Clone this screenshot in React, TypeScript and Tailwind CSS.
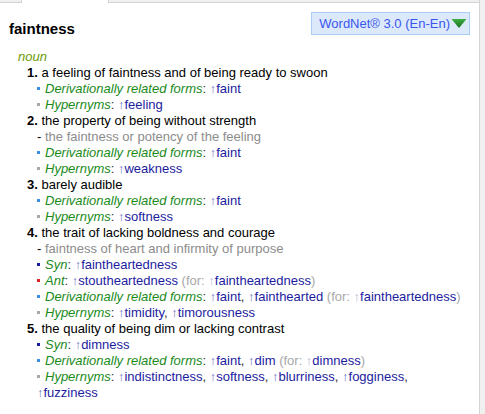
type Part = { t: string; link?: boolean; muted?: boolean };

const Up = ({ muted }: { muted?: boolean }) => (
  <span className={muted ? "text-[#b4b4d8]" : "text-[#7070c0]"}>↑</span>
);

function Links({ parts }: { parts: Part[] }) {
  return (
    <>
      {parts.map((p, i) =>
        p.link ? (
          <span key={i}>
            <Up muted={p.muted} />
            <span className="text-[#1c1ca0]">{p.t}</span>
          </span>
        ) : (
          <span key={i} className={p.muted ? "text-[#a8a8a8]" : "text-[#333]"}>
            {p.t}
          </span>
        )
      )}
    </>
  );
}

function Rel({ dot, label, parts }: { dot: string; label: string; parts: Part[] }) {
  return (
    <div className="pl-[37px] pr-[10px]">
      <span className={`inline-block w-[3px] h-[3px] mr-[5px] align-[3px] ${dot}`} />
      <span className="italic text-[#1a8a1a]">{label}</span>
      <span className="text-[#333]">: </span>
      <Links parts={parts} />
    </div>
  );
}

function Sense({ n, text }: { n: number; text: string }) {
  return (
    <div className="pl-[27px] text-black">
      <b>{n}.</b> {text}
    </div>
  );
}

function Gloss({ text }: { text: string }) {
  return (
    <div className="pl-[37px] text-[#8c8c8c]">
      <span className="text-black">-</span> {text}
    </div>
  );
}

const DER = "bg-[#3a8ee6]";
const HYP = "bg-[#a8a8a8]";
const SYN = "bg-[#1c1ca0]";
const ANT = "bg-[#e02020]";

export default function App() {
  return (
    <div className="flex h-[414px] w-[485px] bg-white font-['Liberation_Sans',Arial,sans-serif] overflow-hidden">
      <div className="flex-1 flex flex-col">
        <div className="flex h-[3px]">
          <div className="w-[22px] bg-[#f0f0f0] border-b border-r border-[#d4d4d4]" />
          <div className="w-[86px]" />
          <div className="flex-1 bg-[#f0f0f0] border-b border-l border-[#d4d4d4]" />
        </div>
        <div className="flex justify-between h-[46px] pl-[9px] pr-[9px]">
          <div className="pt-[18px] text-[15px] leading-[16px] font-bold text-black">faintness</div>
          <div className="mt-[9px] h-[23px] flex items-center pl-[7px] pr-[2px] bg-[#dbe9fb] border border-[#aacdf4] text-[13px] text-[#3a55ee]">
            <span>WordNet® 3.0 (En-En)</span>
            <svg width="16" height="11" viewBox="0 0 16 11" className="ml-[1px]">
              <defs>
                <linearGradient id="g" x1="0" y1="0" x2="0" y2="1">
                  <stop offset="0" stopColor="#3cb043" />
                  <stop offset="1" stopColor="#1a6e1a" />
                </linearGradient>
              </defs>
              <path d="M0.5 1 L15.5 1 L8 10 Z" fill="url(#g)" />
            </svg>
          </div>
        </div>
        <div className="text-[13px] leading-[16px]">
          <div className="pl-[18px] italic text-[#6b9a00]">noun</div>
          <Sense n={1} text="a feeling of faintness and of being ready to swoon" />
          <Rel dot={DER} label="Derivationally related forms" parts={[{ t: "faint", link: true }]} />
          <Rel dot={HYP} label="Hypernyms" parts={[{ t: "feeling", link: true }]} />
          <Sense n={2} text="the property of being without strength" />
          <Gloss text="the faintness or potency of the feeling" />
          <Rel dot={DER} label="Derivationally related forms" parts={[{ t: "faint", link: true }]} />
          <Rel dot={HYP} label="Hypernyms" parts={[{ t: "weakness", link: true }]} />
          <Sense n={3} text="barely audible" />
          <Rel dot={DER} label="Derivationally related forms" parts={[{ t: "faint", link: true }]} />
          <Rel dot={HYP} label="Hypernyms" parts={[{ t: "softness", link: true }]} />
          <Sense n={4} text="the trait of lacking boldness and courage" />
          <Gloss text="faintness of heart and infirmity of purpose" />
          <Rel dot={SYN} label="Syn" parts={[{ t: "faintheartedness", link: true }]} />
          <Rel
            dot={ANT}
            label="Ant"
            parts={[
              { t: "stoutheartedness", link: true },
              { t: " (for: ", muted: true },
              { t: "faintheartedness", link: true, muted: true },
              { t: ")", muted: true },
            ]}
          />
          <Rel
            dot={DER}
            label="Derivationally related forms"
            parts={[
              { t: "faint", link: true },
              { t: ", " },
              { t: "fainthearted", link: true },
              { t: " (for: ", muted: true },
              { t: "faintheartedness", link: true, muted: true },
              { t: ")", muted: true },
            ]}
          />
          <Rel
            dot={HYP}
            label="Hypernyms"
            parts={[
              { t: "timidity", link: true },
              { t: ", " },
              { t: "timorousness", link: true },
            ]}
          />
          <Sense n={5} text="the quality of being dim or lacking contrast" />
          <Rel dot={SYN} label="Syn" parts={[{ t: "dimness", link: true }]} />
          <Rel
            dot={DER}
            label="Derivationally related forms"
            parts={[
              { t: "faint", link: true },
              { t: ", " },
              { t: "dim", link: true },
              { t: " (for: ", muted: true },
              { t: "dimness", link: true, muted: true },
              { t: ")", muted: true },
            ]}
          />
          <Rel
            dot={HYP}
            label="Hypernyms"
            parts={[
              { t: "indistinctness", link: true },
              { t: ", " },
              { t: "softness", link: true },
              { t: ", " },
              { t: "blurriness", link: true },
              { t: ", " },
              { t: "fogginess", link: true },
              { t: ", " },
              { t: "fuzziness", link: true },
            ]}
          />
        </div>
      </div>
      <div className="w-[6px] border-l border-[#d4d4d4] bg-[#f0f0f0]" />
    </div>
  );
}
